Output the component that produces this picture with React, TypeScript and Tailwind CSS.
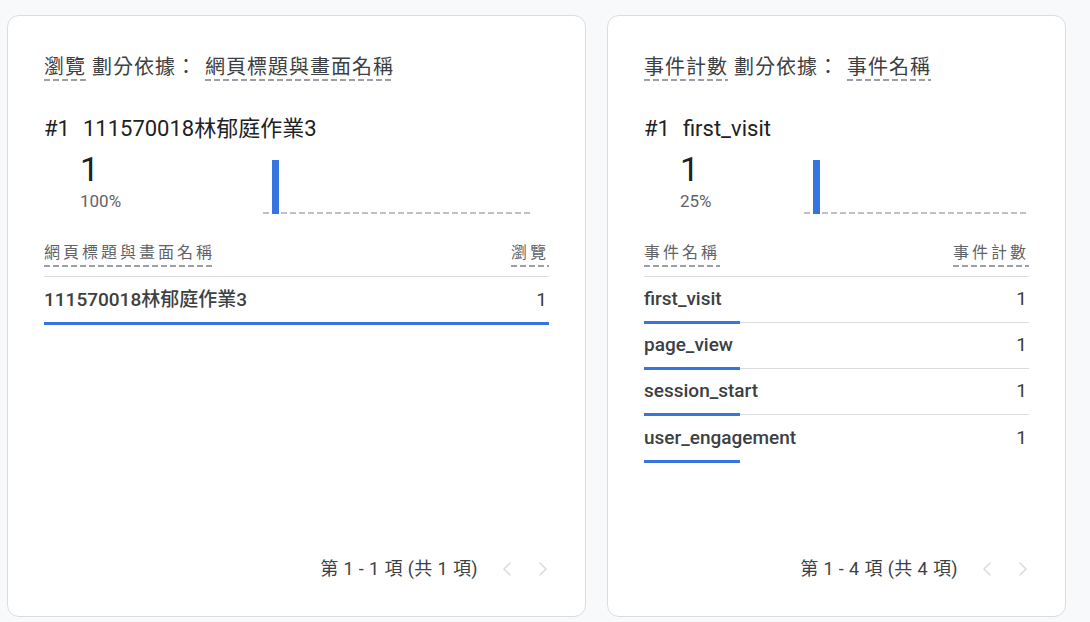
import React from 'react';
import { ChevronLeft, ChevronRight } from 'lucide-react';

interface Row {
  label: string;
  value: number;
  share: number;
}

interface CardProps {
  widthClass: string;
  metric: string;
  dimension: string;
  total: number;
  percent: string;
  statClass: string;
  chartWidth: number;
  rows: Row[];
  range: string;
}

// dashed underline used on metric / dimension names
const dashed =
  'bg-[image:repeating-linear-gradient(to_right,#9aa0a6_0_6px,transparent_6px_9px)] bg-[length:100%_2px] bg-bottom bg-no-repeat';

function MiniChart({ width }: { width: number }) {
  return (
    <svg width={width} height={54} className="mt-[16px] block">
      <line x1={0} y1={53} x2={width} y2={53} stroke="#bdc1c6" strokeWidth={2} strokeDasharray="6 3" />
      <rect x={9} y={0} width={7} height={54} fill="#3874e0" />
    </svg>
  );
}

function ReportCard({ widthClass, metric, dimension, total, percent, statClass, chartWidth, rows, range }: CardProps) {
  return (
    <div className={`flex h-[602px] flex-col rounded-[12px] border border-[#dadce0] bg-white px-[36px] ${widthClass}`}>
      <div className="pt-[37px] text-[20px] leading-[28px] tracking-[1px] text-[#3c4043]">
        <span className={`${dashed} pb-[2px]`}>{metric}</span> 劃分依據：
        <span className={`${dashed} ml-[8px] pb-[2px]`}>{dimension}</span>
      </div>

      <div className="mt-[33px] text-[22px] leading-[30px] text-[#202124]">
        <span>#1</span>
        <span className="ml-[13px] [&>span]:tracking-[1px]">{rows[0].label}</span>
      </div>

      <div className="flex items-start">
        <div className={`pt-[7px] pl-[36px] ${statClass}`}>
          <div className="text-[34px] leading-[36px] text-[#202124]">{total}</div>
          <div className="mt-[4px] text-[17px] leading-[20px] text-[#5f6368]">{percent}</div>
        </div>
        <MiniChart width={chartWidth} />
      </div>

      <div className="mt-[27px] flex justify-between border-b border-[#dadce0] pb-[9px] text-[16px] leading-[24px] tracking-[3px] text-[#5f6368]">
        <span className={`${dashed} pb-[2px]`}>{dimension}</span>
        <span className={`${dashed} pb-[2px]`}>{metric}</span>
      </div>

      <div>
        {rows.map((r, i) => (
          <div
            key={r.label}
            className={`relative flex h-[46px] items-center justify-between text-[19px] text-[#3c4043] ${
              i < rows.length - 1 ? 'border-b border-[#dadce0]' : ''
            }`}
          >
            <span className="font-medium">{r.label}</span>
            <span className="pr-[2px]">{r.value}</span>
            <div className="absolute -bottom-[2px] left-0 z-10 h-[3px] bg-[#3874e0]" style={{ width: `${r.share}%` }} />
          </div>
        ))}
      </div>

      <div className="mt-auto flex items-center justify-end pb-[35px]">
        <span className="text-[18px] leading-[24px] tracking-[0.4px] text-[#3c4043]">{range}</span>
        <ChevronLeft className="ml-[17px] text-[#dadce0]" size={24} strokeWidth={1.6} />
        <ChevronRight className="ml-[12px] -mr-[6px] text-[#dadce0]" size={24} strokeWidth={1.6} />
      </div>
    </div>
  );
}

export default function App() {
  return (
    <div className="min-h-screen bg-[#f8f9fa] font-[Roboto,'Noto_Sans_CJK_TC',sans-serif]">
      <div className="flex gap-[21px] pt-[15px] pl-[7px]">
        <ReportCard
          widthClass="w-[579px]"
          metric="瀏覽"
          dimension="網頁標題與畫面名稱"
          total={1}
          percent="100%"
          statClass="w-[219px]"
          chartWidth={268}
          rows={[{ label: '111570018林郁庭作業3', value: 1, share: 100 }]}
          range="第 1 - 1 項 (共 1 項)"
        />
        <ReportCard
          widthClass="w-[459px]"
          metric="事件計數"
          dimension="事件名稱"
          total={1}
          percent="25%"
          statClass="w-[160px]"
          chartWidth={224}
          rows={[
            { label: 'first_visit', value: 1, share: 25 },
            { label: 'page_view', value: 1, share: 25 },
            { label: 'session_start', value: 1, share: 25 },
            { label: 'user_engagement', value: 1, share: 25 },
          ]}
          range="第 1 - 4 項 (共 4 項)"
        />
      </div>
    </div>
  );
}
